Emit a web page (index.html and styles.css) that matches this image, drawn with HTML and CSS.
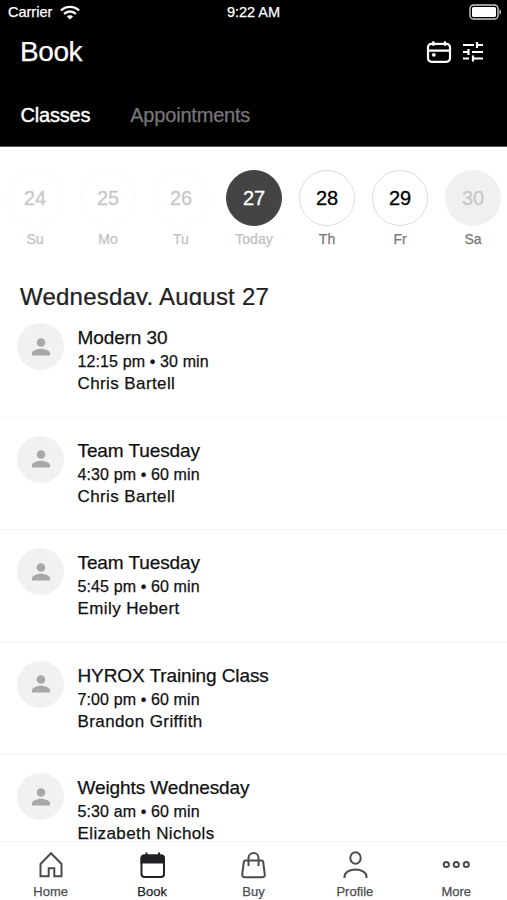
FILE: index.html
```html
<!DOCTYPE html>
<html lang="en">
<head>
<meta charset="utf-8">
<title>Book</title>
<link rel="stylesheet" href="styles.css">
</head>
<body>
<div class="app">
  <header class="header">
    <div class="status">
      <div class="carrier"><span>Carrier</span>
        <svg width="20" height="15" viewBox="0 0 20 15" fill="none" stroke="#fff" stroke-width="2.3"><path d="M.9 5.5a13 13 0 0 1 18.2 0M4.1 8.9a8.400 8.400 0 0 1 11.8 0"/><path d="M10 14.4 6.9 11.5a4.400 4.400 0 0 1 6.2 0Z" fill="#fff" stroke="none"/></svg>
      </div>
      <span class="clock">9:22 AM</span>
      <svg class="battery" width="33" height="17" viewBox="0 0 33 17" fill="none"><rect x="1" y="1" width="28" height="14" rx="3.6" stroke="#ccc" stroke-width="1.4"/><rect x="3" y="3" width="24" height="10" rx="1.6" fill="#fff"/><path d="M30.5 5.3c2 .7 2 4.7 0 5.400Z" fill="#ccc"/></svg>
    </div>
    <div class="titlebar">
      <h1>Book</h1>
      <div class="actions">
        <svg width="26" height="24" viewBox="0 0 26 24" fill="none" stroke="#fff" stroke-width="2.200"><rect x="2" y="3.8" width="22" height="18" rx="3.500"/><path d="M2 10.6h22M7.3 1.2v4.500M19 1.2v4.500"/><circle cx="7.8" cy="14.8" r="1.9" fill="#fff" stroke="none"/></svg>
        <svg width="22" height="22" viewBox="0 0 22 22" fill="none" stroke="#fff" stroke-width="2.200"><path d="M1 4h11M15 4h6M15 1v6M1 11h5M6.500 8v6M10 11H21M1 17.500h6M11 17.500H21M11 14.500v6"/></svg>
      </div>
    </div>
    <nav class="tabs"><span class="tab active">Classes</span><span class="tab">Appointments</span></nav>
  </header>
  <section class="dates">
    <div class="day past"><b>24</b><span>Su</span></div>
    <div class="day past"><b>25</b><span>Mo</span></div>
    <div class="day past"><b>26</b><span>Tu</span></div>
    <div class="day today"><b>27</b><span>Today</span></div>
    <div class="day"><b>28</b><span>Th</span></div>
    <div class="day"><b>29</b><span>Fr</span></div>
    <div class="day closed"><b>30</b><span>Sa</span></div>
  </section>
  <h2>Wednesday, August 27</h2>
  <main class="list">
    <article class="row"><div class="avatar"><svg width="18" height="18" viewBox="0 0 18 18"><circle cx="9" cy="4.500" r="4.300"/><path d="M0 17.500v-2.200c0-3 6-4.500 9-4.500s9 1.500 9 4.500v2.200Z"/></svg></div><div class="info"><h3>Modern 30</h3><p class="time">12:15 pm • 30 min</p><p class="coach">Chris Bartell</p></div></article>
    <article class="row"><div class="avatar"><svg width="18" height="18" viewBox="0 0 18 18"><circle cx="9" cy="4.500" r="4.300"/><path d="M0 17.500v-2.200c0-3 6-4.500 9-4.500s9 1.500 9 4.500v2.200Z"/></svg></div><div class="info"><h3>Team Tuesday</h3><p class="time">4:30 pm • 60 min</p><p class="coach">Chris Bartell</p></div></article>
    <article class="row"><div class="avatar"><svg width="18" height="18" viewBox="0 0 18 18"><circle cx="9" cy="4.500" r="4.300"/><path d="M0 17.500v-2.200c0-3 6-4.500 9-4.500s9 1.500 9 4.500v2.200Z"/></svg></div><div class="info"><h3>Team Tuesday</h3><p class="time">5:45 pm • 60 min</p><p class="coach">Emily Hebert</p></div></article>
    <article class="row"><div class="avatar"><svg width="18" height="18" viewBox="0 0 18 18"><circle cx="9" cy="4.500" r="4.300"/><path d="M0 17.500v-2.200c0-3 6-4.500 9-4.500s9 1.500 9 4.500v2.200Z"/></svg></div><div class="info"><h3>HYROX Training Class</h3><p class="time">7:00 pm • 60 min</p><p class="coach">Brandon Griffith</p></div></article>
    <article class="row"><div class="avatar"><svg width="18" height="18" viewBox="0 0 18 18"><circle cx="9" cy="4.500" r="4.300"/><path d="M0 17.500v-2.200c0-3 6-4.500 9-4.500s9 1.500 9 4.500v2.200Z"/></svg></div><div class="info"><h3>Weights Wednesday</h3><p class="time">5:30 am • 60 min</p><p class="coach">Elizabeth Nichols</p></div></article>
  </main>
  <footer class="bottom">
    <div class="item"><svg width="30" height="30" viewBox="0 0 30 30"><path d="M4.500 13 15 2.300 25.500 13v12.200h-7.200v-8h-5.600v8H4.500Z"/></svg><span>Home</span></div>
    <div class="item selected"><svg width="30" height="30" viewBox="0 0 30 30"><rect x="4.500" y="4.500" width="22.500" height="21.500" rx="3"/><path d="M4.500 11.500V7.500q0-3 3-3H24q3 0 3 3v4Z" fill="#202124"/><path d="M9.500 1.500v4M22 1.500v4"/></svg><span>Book</span></div>
    <div class="item"><svg width="30" height="30" viewBox="0 0 30 30"><path d="M7.500 9.500h16q1.500 0 1.700 1.500l1.600 12.500q.2 2.700-2.500 2.700H6.700Q4 26.200 4.200 23.500L5.800 11q.2-1.500 1.700-1.500ZM10.500 15V7a5 5 0 0 1 10 0V15"/></svg><span>Buy</span></div>
    <div class="item"><svg width="30" height="30" viewBox="0 0 30 30"><ellipse cx="15.500" cy="7" rx="5.200" ry="5.800"/><path d="M4.500 27v-1.300c0-9.500 22-9.500 22 0v1.300"/></svg><span>Profile</span></div>
    <div class="item"><svg width="30" height="30" viewBox="0 0 30 30"><circle cx="5.300" cy="13.500" r="2.600"/><circle cx="15.300" cy="13.500" r="2.600"/><circle cx="25.300" cy="13.500" r="2.600"/></svg><span>More</span></div>
  </footer>
</div>
</body>
</html>
```
FILE: styles.css
```css
* { box-sizing: border-box; margin: 0; padding: 0; }
body { font-family: "Liberation Sans", Arial, sans-serif; background: #fff; color: #111; -webkit-text-stroke: .25px; }
svg { display: block; flex: none; }
.app { width: 507px; height: 900px; display: flex; flex-direction: column; overflow: hidden; }
.header { height: 147px; flex: none; background: #000; color: #fff; border-bottom: 1px solid #555; }
.status { height: 24px; display: grid; grid-template-columns: 1fr auto 1fr; align-items: center; padding: 0 5px 0 8px; font-size: 14.5px; }
.carrier { display: flex; gap: 8px; align-items: center; }
.clock { margin-right: 3px; }
.battery { justify-self: end; }
.titlebar { height: 56px; display: flex; justify-content: space-between; align-items: center; padding: 0 23px 0 20px; }
h1 { font-size: 28px; font-weight: 400; letter-spacing: -.4px; }
.actions { display: flex; align-items: center; gap: 10px; }
.tabs { display: flex; gap: 40px; padding: 22px 0 0 20.5px; font-size: 20px; line-height: 26px; letter-spacing: -.2px; }
.tab { color: #777; }
.tab.active { color: #fff; -webkit-text-stroke: .4px #fff; }
.dates { height: 133px; flex: none; display: flex; gap: 17px; padding: 23px 0 0 7px; }
.day { width: 56px; display: flex; flex-direction: column; align-items: center; }
.day b { width: 56px; height: 56px; border: 1px solid #ddd; border-radius: 50%; font-weight: 400; font-size: 20px; line-height: 54px; text-align: center; color: #000; -webkit-text-stroke: .3px; }
.day span { font-size: 14px; line-height: 18px; margin-top: 4px; color: #777; }
.past b { color: #c8c8c8; border-color: #fcfcfc; }
.past span, .today span { color: #c2c2c2; }
.today b { background: #444; border-color: #444; color: #fff; }
.closed b { background: #f0f0f0; border-color: #f0f0f0; color: #c8c8c8; }
h2 { height: 25px; flex: none; overflow: hidden; padding-left: 20px; font-size: 24px; line-height: 33px; font-weight: 400; letter-spacing: .22px; color: #222; }
.list { flex: 1; min-height: 0; overflow: hidden; }
.row { height: 112.5px; display: flex; gap: 13.5px; padding: 18px 0 0 17px; border-bottom: 1px solid #f3f3f3; }
.row:first-child { border-bottom-color: #f8f8f8; }
.avatar { width: 47px; height: 47px; border-radius: 50%; background: #f1f1f1; display: flex; align-items: center; justify-content: center; }
.avatar svg { fill: #a8a8a8; }
.info { padding-top: 2px; }
h3 { font-size: 19px; line-height: 25px; font-weight: 400; letter-spacing: -.1px; }
.time { font-size: 16px; line-height: 23px; letter-spacing: .12px; }
.coach { font-size: 17px; line-height: 22px; letter-spacing: .4px; }
.bottom { height: 59px; flex: none; display: grid; grid-template-columns: repeat(5, 1fr); border-top: 1px solid #f1f1f1; background: #fff; }
.item { display: flex; flex-direction: column; align-items: center; padding-top: 9px; color: #4b4c50; font-size: 13px; line-height: 16px; }
.item svg { fill: none; stroke: currentColor; stroke-width: 2; }
.item span { margin-top: 3px; }
.selected { color: #202124; }
```
